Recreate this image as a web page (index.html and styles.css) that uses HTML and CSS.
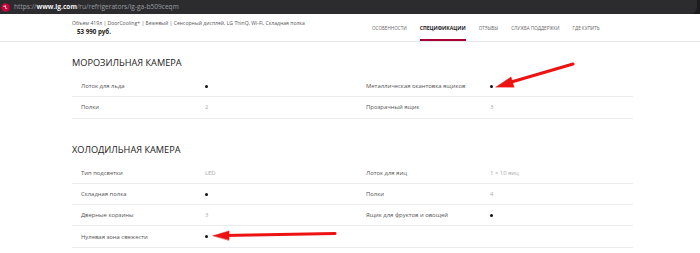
FILE: index.html
```html
<!DOCTYPE html>
<html lang="ru">
<head>
<meta charset="utf-8">
<title>LG GA-B509CEQM</title>
<link rel="stylesheet" href="styles.css">
</head>
<body>
<div class="browserbar">
  <div class="omnibox">
    <svg class="favicon" width="9" height="9" viewBox="0 0 9 9">
      <circle cx="4.5" cy="4.5" r="4.3" fill="#c8003c"/>
      <circle cx="3.1" cy="3.2" r="0.7" fill="#fff"/>
      <path d="M4.6 2.2v3.2h1.6" stroke="#fff" stroke-width="0.7" fill="none"/>
    </svg>
    <span class="url"><span class="url-dim">https://</span><span class="url-host">www.lg.com</span><span class="url-dim">/ru/refrigerators/lg-ga-b509ceqm</span></span>
  </div>
</div>

<header class="header">
  <div class="product">
    <div class="product-desc">Объем 419л | DoorCooling+ | Бежевый | Сенсорный дисплей, LG ThinQ, Wi-Fi, Складная полка</div>
    <div class="product-price">53 990 руб.</div>
  </div>
  <nav class="tabs">
    <span class="tab">ОСОБЕННОСТИ</span>
    <span class="tab tab-active">СПЕЦИФИКАЦИИ</span>
    <span class="tab">ОТЗЫВЫ</span>
    <span class="tab">СЛУЖБА ПОДДЕРЖКИ</span>
    <span class="tab">ГДЕ КУПИТЬ</span>
  </nav>
</header>

<main class="specs">
  <section class="spec-section">
    <h2 class="spec-title">МОРОЗИЛЬНАЯ КАМЕРА</h2>
    <div class="spec-grid">
      <div class="spec-row spec-left"><span class="spec-label">Лоток для льда</span><span class="spec-value"><span class="dot"></span></span></div>
      <div class="spec-row spec-right"><span class="spec-label">Металлическая окантовка ящиков</span><span class="spec-value"><span class="dot"></span></span></div>
      <div class="spec-row spec-left"><span class="spec-label">Полки</span><span class="spec-value">2</span></div>
      <div class="spec-row spec-right"><span class="spec-label">Прозрачный ящик</span><span class="spec-value">3</span></div>
    </div>
  </section>

  <section class="spec-section spec-section-2">
    <h2 class="spec-title">ХОЛОДИЛЬНАЯ КАМЕРА</h2>
    <div class="spec-grid">
      <div class="spec-row spec-left"><span class="spec-label">Тип подсветки</span><span class="spec-value">LED</span></div>
      <div class="spec-row spec-right"><span class="spec-label">Лоток для яиц</span><span class="spec-value">1 × 10 яиц</span></div>
      <div class="spec-row spec-left"><span class="spec-label">Складная полка</span><span class="spec-value"><span class="dot"></span></span></div>
      <div class="spec-row spec-right"><span class="spec-label">Полки</span><span class="spec-value">4</span></div>
      <div class="spec-row spec-left"><span class="spec-label">Дверные корзины</span><span class="spec-value">3</span></div>
      <div class="spec-row spec-right"><span class="spec-label">Ящик для фруктов и овощей</span><span class="spec-value"><span class="dot"></span></span></div>
      <div class="spec-row spec-left"><span class="spec-label">Нулевая зона свежести</span><span class="spec-value"><span class="dot"></span></span></div>
      <div class="spec-row spec-right"></div>
    </div>
  </section>
</main>

<svg class="annotations" width="700" height="253" viewBox="0 0 700 253">
  <g fill="#ee1313" stroke="#ee1313" stroke-linecap="round">
    <line x1="573" y1="64" x2="508" y2="83" stroke-width="3"/>
    <polygon points="496,87 511,77 514,87" stroke-width="0.5"/>
    <line x1="335" y1="233.5" x2="224" y2="235.5" stroke-width="3"/>
    <polygon points="213,235.7 229,231 229,240" stroke-width="0.5"/>
  </g>
</svg>
</body>
</html>
```

FILE: styles.css
```css
* { box-sizing: border-box; }

html, body {
  margin: 0;
  padding: 0;
  background: #fff;
}

body {
  position: relative;
  width: 700px;
  height: 253px;
  overflow: hidden;
  font-family: "Open Sans", "Noto Sans", Arial, sans-serif;
  color: #333;
}

/* browser bar */
.browserbar {
  height: 14px;
  background: #1c1c1e;
  padding-right: 3px;
}

.omnibox {
  height: 14px;
  background: #2c2c2f;
  border-radius: 0 0 7px 0;
  display: flex;
  align-items: center;
  padding-left: 1px;
  gap: 4px;
}

.favicon { flex: none; }

.url {
  font-size: 6.6px;
  line-height: 1;
  white-space: nowrap;
}

.url-dim { color: #9a9ca0; }
.url-host { color: #f1f1f1; font-weight: 700; }

/* product header */
.header {
  height: 28px;
  border-bottom: 1px solid #e8e8e8;
  display: flex;
  padding-left: 72px;
}

.product {
  width: 300px;
  padding-top: 6px;
}

.product-desc {
  font-size: 5.1px;
  line-height: 7px;
  color: #555;
  white-space: nowrap;
}

.product-price {
  font-size: 6.2px;
  line-height: 9px;
  font-weight: 700;
  color: #222;
  padding-left: 5px;
}

.tabs {
  display: flex;
  gap: 13px;
}

.tab {
  display: flex;
  align-items: center;
  font-size: 4.6px;
  color: #666;
  white-space: nowrap;
  border-bottom: 2px solid transparent;
  padding-top: 2px;
}

.tab-active {
  font-size: 5.1px;
  font-weight: 700;
  color: #222;
  border-bottom-color: #a50034;
}

/* specs */
.specs {
  padding-left: 72px;
  padding-top: 15px;
}

.spec-section-2 { margin-top: 25px; }

.spec-title {
  margin: 0 0 7px;
  font-size: 9.2px;
  line-height: 12px;
  font-weight: 400;
  color: #222;
  white-space: nowrap;
}

.spec-grid {
  display: grid;
  grid-template-columns: 278px 283px;
}

.spec-row {
  height: 21.3px;
  border-bottom: 1px solid #ececec;
  display: flex;
  align-items: center;
  font-size: 5.9px;
  white-space: nowrap;
}

.spec-left { padding-left: 9px; }
.spec-right { padding-left: 16px; }

.spec-label {
  width: 124px;
  color: #555;
}

.spec-value {
  color: #aaa;
  display: flex;
  align-items: center;
}

.dot {
  display: inline-block;
  width: 3px;
  height: 3px;
  border-radius: 50%;
  background: #111;
}

.annotations {
  position: absolute;
  left: 0;
  top: 0;
  pointer-events: none;
}
```
